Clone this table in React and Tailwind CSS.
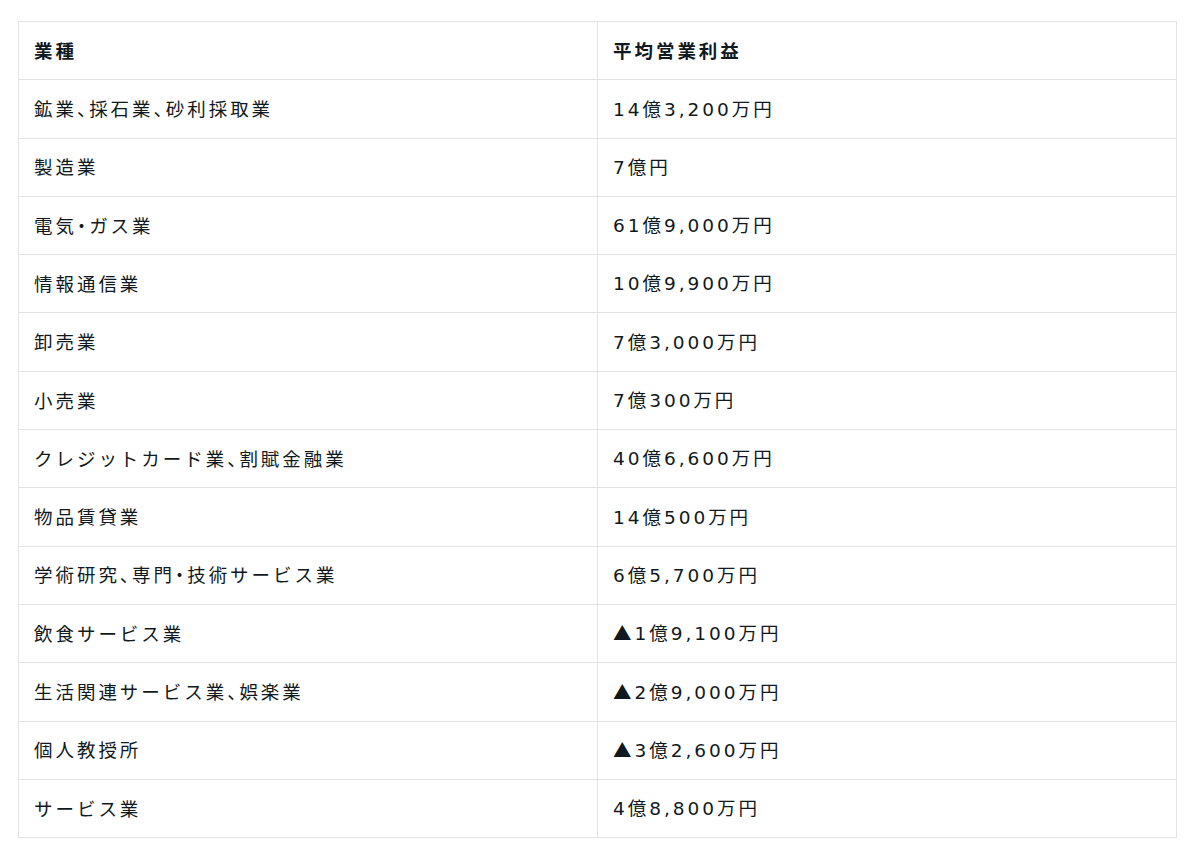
const rows = [
    ['鉱業、採石業、砂利採取業', '14億3,200万円'],
    ['製造業', '7億円'],
    ['電気・ガス業', '61億9,000万円'],
    ['情報通信業', '10億9,900万円'],
    ['卸売業', '7億3,000万円'],
    ['小売業', '7億300万円'],
    ['クレジットカード業、割賦金融業', '40億6,600万円'],
    ['物品賃貸業', '14億500万円'],
    ['学術研究、専門・技術サービス業', '6億5,700万円'],
    ['飲食サービス業', '▲1億9,100万円'],
    ['生活関連サービス業、娯楽業', '▲2億9,000万円'],
    ['個人教授所', '▲3億2,600万円'],
    ['サービス業', '4億8,800万円'],
];

// digits get a wider latin face, punctuation gets half-width
const Text = ({ children }) =>
    children.split(/([0-9,]+|[、・])/).map((part, i) => {
        if (/^[0-9,]+$/.test(part)) {
            return (
                <span key={i} className="font-['DejaVu_Sans'] tracking-[0.16em]">
                    {part}
                </span>
            );
        }
        if (part === '、' || part === '・') {
            return (
                <span key={i} className="[font-feature-settings:'halt']">
                    {part}
                </span>
            );
        }
        return part;
    });

const App = () => {
    return (
        <div
            className="bg-white min-h-[860px] pt-[21px] pl-[18px] pr-[23px]"
            style={{ fontFamily: '"Noto Sans CJK JP", "Noto Sans", sans-serif' }}
        >
            <table className="w-full border-collapse table-fixed text-[18.5px] text-[#101920] tracking-[0.16em]">
                <thead>
                    <tr className="h-[58.3px]">
                        <th className="border border-[#e3e3e3] px-[15px] text-left font-bold">業種</th>
                        <th className="border border-[#e3e3e3] px-[15px] text-left font-bold">平均営業利益</th>
                    </tr>
                </thead>
                <tbody className="font-normal">
                    {rows.map(([name, value]) => (
                        <tr key={name} className="h-[58.3px]">
                            <td className="border border-[#e3e3e3] px-[15px]">
                                <Text>{name}</Text>
                            </td>
                            <td className="border border-[#e3e3e3] px-[15px]">
                                <Text>{value}</Text>
                            </td>
                        </tr>
                    ))}
                </tbody>
            </table>
        </div>
    );
};

export default App;
